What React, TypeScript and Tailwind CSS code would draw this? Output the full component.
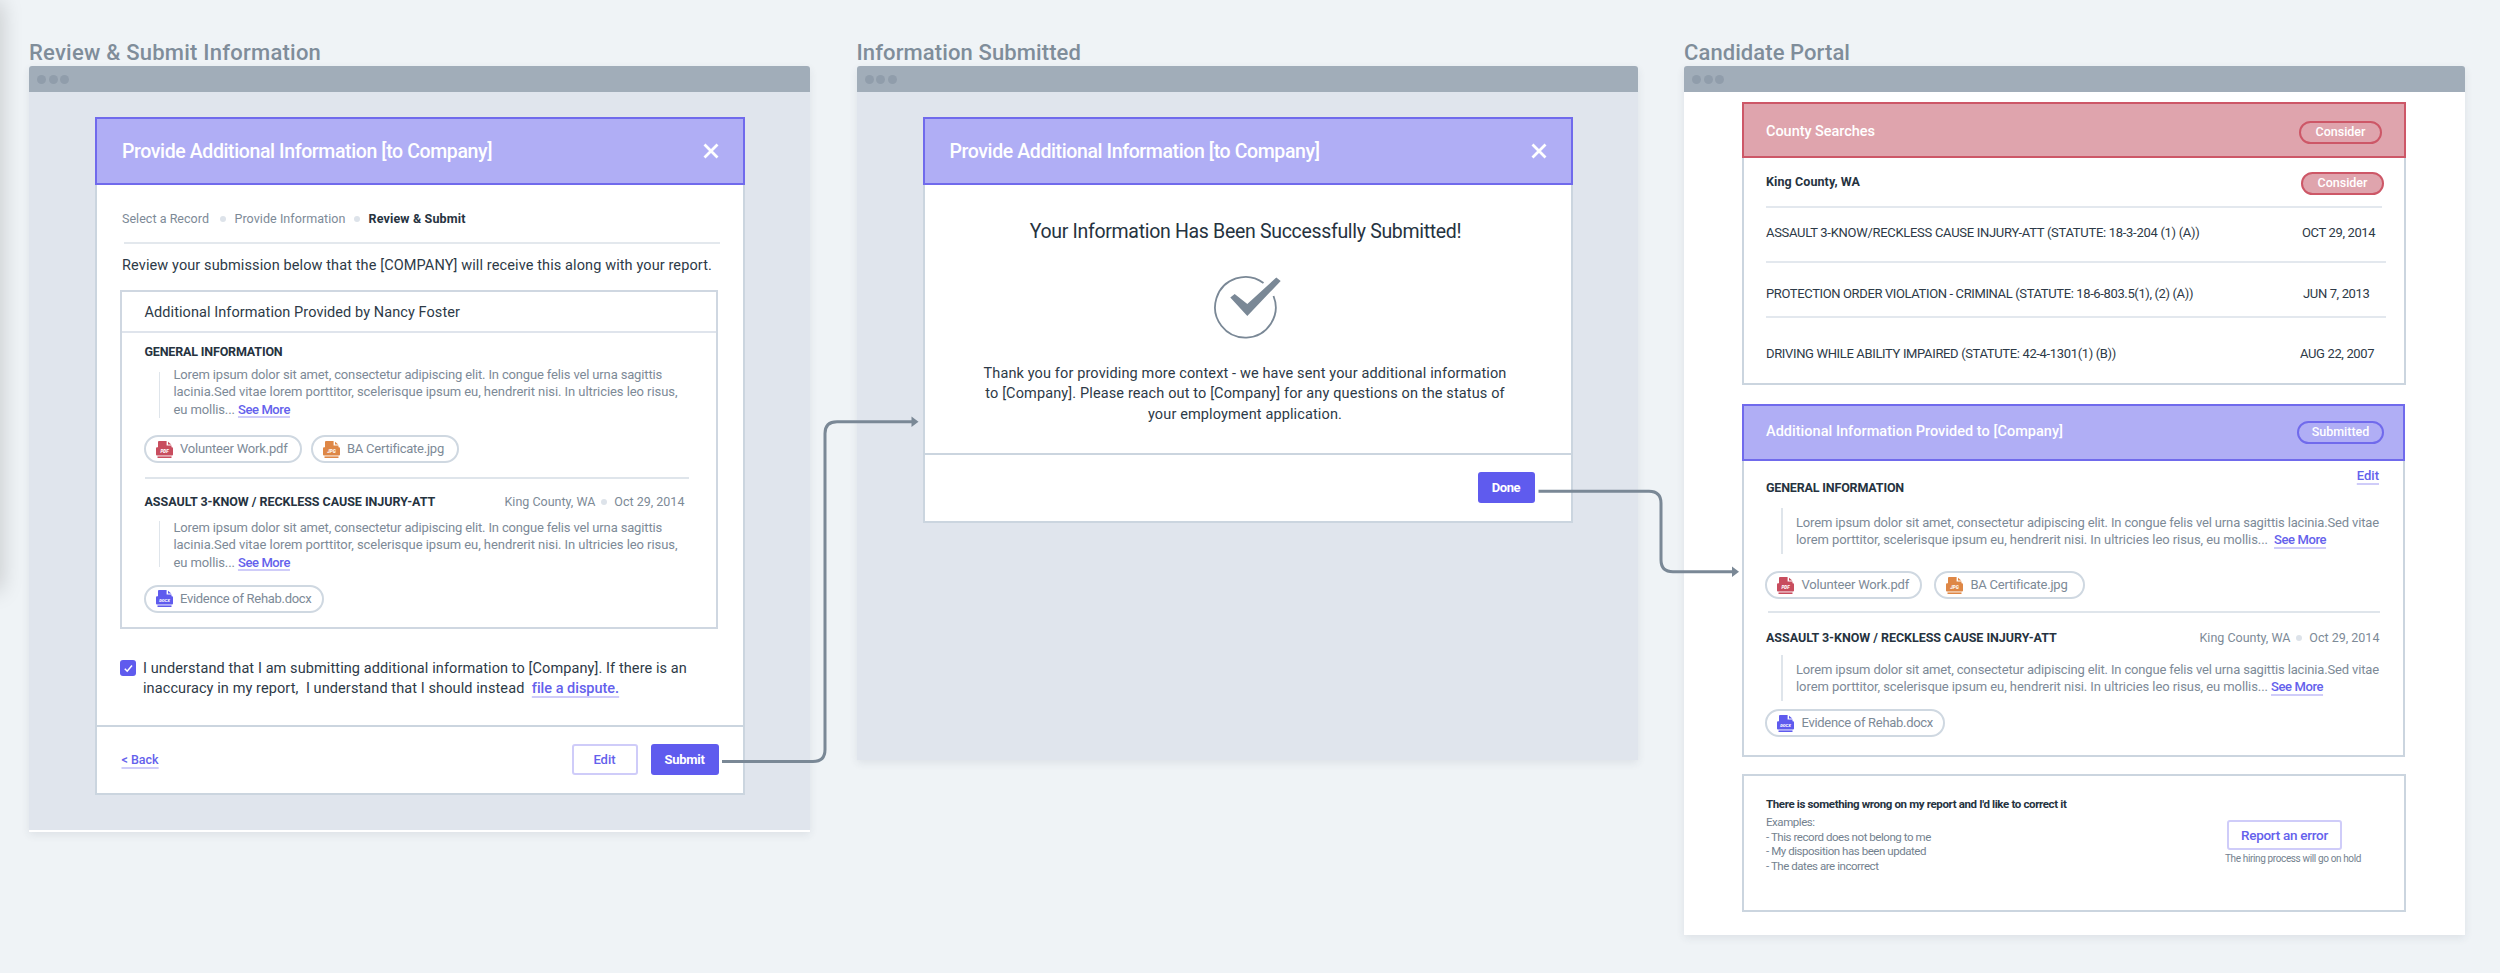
import React from "react";
import clsx from "clsx";

type FrameProps = {
  title: string;
  titleClass: string;
  bodyClass: string;
  children: React.ReactNode;
};

function Frame({ title, titleClass, bodyClass, children }: FrameProps) {
  return (
    <section className="w-[781px] shrink-0">
      <h2 className={clsx("h-[23px] text-[22px] leading-5 font-medium text-[#7f8d9a]", titleClass)}>
        {title}
      </h2>
      <div className="shadow-[0_3px_9px_rgba(40,50,80,0.09)] rounded-t-[3px]">
        <div className="flex items-center gap-[2.5px] h-[26px] pl-2 rounded-t-[3px] bg-[#a1adb9]">
          <span className="size-[9px] rounded-full bg-[#909dab]" />
          <span className="size-[9px] rounded-full bg-[#909dab]" />
          <span className="size-[9px] rounded-full bg-[#909dab]" />
        </div>
        <div className={bodyClass}>{children}</div>
      </div>
    </section>
  );
}

function Modal({ className, children }: { className: string; children: React.ReactNode }) {
  return (
    <div className={clsx("flex flex-col w-[650px] bg-white", className)}>
      <header className="flex items-center justify-between h-[68px] shrink-0 pl-[25px] pr-[24px] bg-[#b0aef5] border-2 border-[#706aec]">
        <h3 className="pt-[2px] text-[19.5px] leading-5 font-medium tracking-[-0.0201em] text-white">
          Provide Additional Information [to Company]
        </h3>
        <svg className="w-4 h-4" viewBox="0 0 16 16" fill="none" stroke="#fff" strokeWidth="2.8">
          <path d="M1.5 1.5l13 13M14.5 1.5l-13 13" />
        </svg>
      </header>
      <div className="flex flex-col grow border-2 border-t-0 border-[#cbd5df]">{children}</div>
    </div>
  );
}

function Dot({ className }: { className?: string }) {
  return <span className={clsx("size-[5.5px] rounded-full bg-[#dde3ea]", className)} />;
}

function Link({ className, children }: { className?: string; children: React.ReactNode }) {
  return (
    <a
      className={clsx(
        "font-medium text-[#6461ec] underline decoration-2 decoration-[#cfccf9] [text-decoration-skip-ink:none]",
        className
      )}
    >
      {children}
    </a>
  );
}

const fileColors = {
  PDF: "text-[#c84d5e]",
  JPG: "text-[#de8746]",
  DOCX: "text-[#5f5bee]",
};

type FilePillProps = {
  kind: keyof typeof fileColors;
  name: string;
  className: string;
  textClass: string;
};

function FilePill({ kind, name, className, textClass }: FilePillProps) {
  return (
    <div
      className={clsx(
        "flex items-center h-[28px] pl-[10px] border-2 border-[#cfd8e1] rounded-full",
        className
      )}
    >
      <svg className={clsx("size-[17px] shrink-0", fileColors[kind])} viewBox="0 0 17 17" fill="currentColor">
        <path d="M2 1Q2 0 3 0H10.6V4.6H15.5V6.3H16Q17 6.3 17 7.4V13.5Q17 14.5 16 14.5H1Q0 14.5 0 13.5V7.4Q0 6.3 1 6.3H2Z" />
        <path d="M12 .8L15.3 3.6H12Z" />
        <path d="M1.5 15.4H15.5V17H1.5Z" />
        <text
          x="8.5"
          y="12"
          fill="#fff"
          textAnchor="middle"
          fontWeight="900"
          fontStyle="italic"
          fontSize={kind === "DOCX" ? 4.2 : 4.6}
        >
          {kind}
        </text>
      </svg>
      <span className={clsx("ml-[7.5px] text-[13px] leading-5 whitespace-nowrap text-[#7d8a97]", textClass)}>
        {name}
      </span>
    </div>
  );
}

type QuoteProps = {
  className: string;
  barClass?: string;
  textClass: string;
  children: React.ReactNode;
};

function Quote({ className, barClass, textClass, children }: QuoteProps) {
  return (
    <div className={clsx("flex", className)}>
      <span className={clsx("w-[1.5px] h-[46px] shrink-0 bg-[#dfe5eb]", barClass)} />
      <p className={clsx("text-[13px] leading-[17.3px] whitespace-nowrap text-[#7d8a97]", textClass)}>
        {children}
      </p>
    </div>
  );
}

function Badge({ className, children }: { className: string; children: React.ReactNode }) {
  return (
    <span
      className={clsx(
        "flex items-center justify-center h-[23px] border-2 rounded-full text-[12.5px] font-medium text-white",
        className
      )}
    >
      {children}
    </span>
  );
}

const records = [
  {
    name: "ASSAULT 3-KNOW/RECKLESS CAUSE INJURY-ATT (STATUTE: 18-3-204 (1) (A))",
    date: "OCT 29, 2014",
    row: "h-[53px] pt-[15px] pr-[20px]",
    tracking: "tracking-[-0.0226em]",
  },
  {
    name: "PROTECTION ORDER VIOLATION - CRIMINAL (STATUTE: 18-6-803.5(1), (2) (A))",
    date: "JUN 7, 2013",
    row: "h-[53px] pt-[21px] pr-[19px]",
    tracking: "tracking-[-0.0286em]",
  },
  {
    name: "DRIVING WHILE ABILITY IMPAIRED (STATUTE: 42-4-1301(1) (B))",
    date: "AUG 22, 2007",
    row: "pt-[26px] pr-[22px]",
    tracking: "tracking-[-0.0268em]",
  },
];

function ReviewModal() {
  return (
    <Modal className="ml-[66px] h-[678px]">
      <div className="flex items-center h-5 mt-6 pl-[25px] text-[12.5px] text-[#7d8a97]">
        <span className="tracking-[0.0025em]">Select a Record</span>
        <Dot className="ml-[11px]" />
        <span className="ml-[9px] tracking-[0.0049em]">Provide Information</span>
        <Dot className="ml-[8.5px]" />
        <span className="ml-[9px] font-bold tracking-[0.0119em] text-[#26333f]">Review &amp; Submit</span>
      </div>
      <hr className="mt-[13px] ml-[27px] w-[596px] border-0 h-[2px] bg-[#e3e8ed]" />
      <p className="mt-3 pl-[25px] text-[14.5px] leading-5 tracking-[0.0074em] whitespace-nowrap text-[#2d3a47]">
        Review your submission below that the [COMPANY] will receive this along with your report.
      </p>

      <div className="mt-[14px] ml-[23px] w-[598px] h-[339px] border-2 border-[#cfd7e1]">
        <h4 className="h-[41px] pt-[11px] pl-[22.5px] border-b-2 border-[#dfe4ec] text-[14.5px] leading-5 tracking-[0.0053em] text-[#2d3a47]">
          Additional Information Provided by Nancy Foster
        </h4>
        <div className="pl-[22.5px]">
          <h5 className="mt-[9px] text-[12.5px] leading-5 font-bold tracking-[-0.0134em] text-[#26333f]">
            GENERAL INFORMATION
          </h5>
          <Quote className="mt-[4px] ml-[14px]" barClass="mt-[6px]" textClass="ml-[13.5px] tracking-[-0.008em]">
            <span className="tracking-[-0.0115em]">
              Lorem ipsum dolor sit amet, consectetur adipiscing elit. In congue felis vel urna sagittis
            </span>
            <br />
            <span className="tracking-[-0.0046em]">
              lacinia.Sed vitae lorem porttitor, scelerisque ipsum eu, hendrerit nisi. In ultricies leo risus,
            </span>
            <br />
            eu mollis... <Link className="underline-offset-2 tracking-[-0.0309em]">See More</Link>
          </Quote>
          <div className="flex gap-[9px] mt-[17px] -ml-[1px]">
            <FilePill kind="PDF" name="Volunteer Work.pdf" className="w-[158px]" textClass="tracking-[-0.0145em]" />
            <FilePill kind="JPG" name="BA Certificate.jpg" className="w-[148px]" textClass="tracking-[-0.0178em]" />
          </div>
          <hr className="mt-[14px] w-[544px] border-0 h-[2px] bg-[#dfe5eb]" />
          <div className="flex items-center mt-[13px] h-5 text-[12.5px] text-[#7d8a97]">
            <h5 className="w-[360px] font-bold tracking-[-0.0027em] text-[#26333f]">
              ASSAULT 3-KNOW / RECKLESS CAUSE INJURY-ATT
            </h5>
            <span>King County, WA</span>
            <Dot className="ml-[6px]" />
            <span className="ml-[7.5px]">Oct 29, 2014</span>
          </div>
          <Quote className="mt-[7px] ml-[14px]" barClass="mt-[2px]" textClass="ml-[13.5px] tracking-[-0.008em]">
            <span className="tracking-[-0.0115em]">
              Lorem ipsum dolor sit amet, consectetur adipiscing elit. In congue felis vel urna sagittis
            </span>
            <br />
            <span className="tracking-[-0.0046em]">
              lacinia.Sed vitae lorem porttitor, scelerisque ipsum eu, hendrerit nisi. In ultricies leo risus,
            </span>
            <br />
            eu mollis... <Link className="underline-offset-2 tracking-[-0.0309em]">See More</Link>
          </Quote>
          <FilePill
            kind="DOCX"
            name="Evidence of Rehab.docx"
            className="mt-[14px] -ml-[1px] w-[180px]"
            textClass="tracking-[-0.0228em]"
          />
        </div>
      </div>

      <div className="flex mt-[31px] ml-[23px]">
        <span className="flex items-center justify-center size-4 rounded-[3px] bg-[#5f5bee]">
          <svg className="w-[9px] h-[9px]" viewBox="0 0 9 9" fill="none" stroke="#fff" strokeWidth="1.5">
            <path d="M.8 4.8L3.2 7.2L8 1.5" />
          </svg>
        </span>
        <p className="-mt-[1px] ml-[7px] text-[14.5px] leading-[20.4px] tracking-[0.0066em] whitespace-pre text-[#2d3a47]">
          I understand that I am submitting additional information to [Company]. If there is an
          <br />
          {"inaccuracy in my report,  I understand that I should instead  "}
          <Link className="underline-offset-[3px] tracking-[-0.0006em]">file a dispute.</Link>
        </p>
      </div>

      <footer className="flex items-start justify-between mt-auto h-[68px] pt-[17px] pl-[24.5px] pr-[24.5px] border-t-2 border-[#cbd5df] text-[13px]">
        <Link className="mt-[6px] text-[12.5px] leading-5 underline-offset-[3px]">&lt; Back</Link>
        <div className="flex gap-[13px] h-[31px]">
          <button className="w-[66px] border-2 border-[#cfccf9] rounded-[3px] font-medium text-[#6461ec]">Edit</button>
          <button className="w-[68px] rounded-[3px] bg-[#5f5bee] font-bold tracking-[-0.0218em] text-white">
            Submit
          </button>
        </div>
      </footer>
    </Modal>
  );
}

function SubmittedModal() {
  return (
    <Modal className="ml-[66px] h-[406px]">
      <h4 className="mt-[37px] pr-[4px] text-center text-[19.5px] leading-5 tracking-[-0.0161em] text-[#26333f]">
        Your Information Has Been Successfully Submitted!
      </h4>
      <svg className="mt-8 ml-[287.5px] w-[70px] h-[66px]" viewBox="1212 274 70 66">
        <path d="M1263.5 283A30.3 30.3 0 1 0 1273.5 296" fill="none" stroke="#7a8896" strokeWidth="1.8" />
        <path d="M1230.3 297.6L1234.7 294L1247.3 304L1276.3 277.5L1280.7 281L1247.3 316Z" fill="#7a8896" />
      </svg>
      <p className="mt-6 pr-[5px] text-center text-[14.5px] leading-[20.3px] tracking-[0.0088em] text-[#2d3a47]">
        Thank you for providing more context - we have sent your additional information
        <br />
        to [Company]. Please reach out to [Company] for any questions on the status of
        <br />
        your employment application.
      </p>
      <footer className="flex justify-end items-start mt-auto h-[68px] pt-[17px] pr-[36px] border-t-2 border-[#cbd5df]">
        <button className="w-[57px] h-[31px] rounded-[3px] bg-[#5f5bee] text-[13px] font-bold tracking-[-0.03em] text-white">
          Done
        </button>
      </footer>
    </Modal>
  );
}

function CountySearches() {
  return (
    <div className="w-[664px] h-[283px] border-2 border-t-0 border-[#cbd5df]">
      <header className="flex justify-between h-[56px] -mx-[2px] pl-[22px] pr-[22px] bg-[#dfa4ad] border-2 border-[#cd5767]">
        <h3 className="mt-[18px] text-[14.5px] leading-5 font-medium tracking-[-0.0026em] text-white">County Searches</h3>
        <Badge className="mt-[17px] w-[83px] border-[#cd5767]">Consider</Badge>
      </header>
      <div className="pl-[22px]">
        <div className="flex justify-between h-[48px] pt-[14px] pr-[20px]">
          <h4 className="text-[12.5px] leading-5 font-bold tracking-[0.0073em] text-[#26333f]">King County, WA</h4>
          <Badge className="w-[83px] bg-[#dfa4ad] border-[#cd5767]">Consider</Badge>
        </div>
        {records.map((record, i) => (
          <div key={record.date} className={clsx("border-[#e3e8ee] border-t-2", i === 0 ? "mr-[22px]" : "mr-[18px]")}>
            <div className={clsx("flex justify-between w-[638px] text-[13px] leading-5 text-[#2d3a47] whitespace-nowrap", record.row)}>
              <span className={record.tracking}>{record.name}</span>
              <span className="w-[82px] tracking-[-0.0277em]">{record.date}</span>
            </div>
          </div>
        ))}
      </div>
    </div>
  );
}

function AdditionalInformation() {
  return (
    <div className="w-[663px] h-[353px] mt-[19px] border-2 border-t-0 border-[#cbd5df]">
      <header className="flex justify-between h-[57px] -mx-[2px] pl-[22px] pr-[19px] bg-[#b0aef5] border-2 border-[#706aec]">
        <h3 className="mt-[16px] text-[14.5px] leading-5 font-medium tracking-[0.0018em] text-white">
          Additional Information Provided to [Company]
        </h3>
        <Badge className="mt-[15px] w-[87px] border-[#706aec]">Submitted</Badge>
      </header>
      <div className="pl-[22px]">
        <div className="flex justify-between pt-[5px] pr-[24px] leading-5">
          <h5 className="mt-[12px] text-[12.5px] font-bold tracking-[-0.0134em] text-[#26333f]">GENERAL INFORMATION</h5>
          <Link className="text-[13px] underline-offset-[3px]">Edit</Link>
        </div>
        <Quote className="mt-[10px] ml-[15px]" textClass="mt-[6px] ml-[13.5px] tracking-[-0.0115em]">
          Lorem ipsum dolor sit amet, consectetur adipiscing elit. In congue felis vel urna sagittis lacinia.Sed vitae
          <br />
          <span className="tracking-[-0.0055em]">
            lorem porttitor, scelerisque ipsum eu, hendrerit nisi. In ultricies leo risus, eu mollis...{" "}
          </span>
          <Link className="ml-[3px] underline-offset-[3px] tracking-[-0.0309em]">See More</Link>
        </Quote>
        <div className="flex gap-[12px] mt-[17px] -ml-[1px]">
          <FilePill kind="PDF" name="Volunteer Work.pdf" className="w-[157px]" textClass="tracking-[-0.0145em]" />
          <FilePill kind="JPG" name="BA Certificate.jpg" className="w-[151px]" textClass="tracking-[-0.0178em]" />
        </div>
        <hr className="mt-[12px] ml-[2px] w-[612px] border-0 h-[2px] bg-[#dfe5eb]" />
        <div className="flex items-center mt-[15px] h-5 text-[12.5px] text-[#7d8a97]">
          <h5 className="w-[433.5px] font-bold tracking-[-0.0027em] text-[#26333f]">
            ASSAULT 3-KNOW / RECKLESS CAUSE INJURY-ATT
          </h5>
          <span>King County, WA</span>
          <Dot className="ml-[6px]" />
          <span className="ml-[7.5px]">Oct 29, 2014</span>
        </div>
        <Quote className="mt-[7px] ml-[15px]" textClass="mt-[6px] ml-[13.5px] tracking-[-0.0115em]">
          Lorem ipsum dolor sit amet, consectetur adipiscing elit. In congue felis vel urna sagittis lacinia.Sed vitae
          <br />
          <span className="tracking-[-0.0055em]">
            lorem porttitor, scelerisque ipsum eu, hendrerit nisi. In ultricies leo risus, eu mollis...{" "}
          </span>
          <Link className="underline-offset-[3px] tracking-[-0.0309em]">See More</Link>
        </Quote>
        <FilePill
          kind="DOCX"
          name="Evidence of Rehab.docx"
          className="mt-[8px] -ml-[1px] w-[180px]"
          textClass="tracking-[-0.0228em]"
        />
      </div>
    </div>
  );
}

function ReportError() {
  return (
    <div className="flex justify-between w-[664px] h-[138px] mt-[17px] pl-[22px] pr-[43px] border-2 border-[#cbd5df]">
      <div className="pt-[18px]">
        <h5 className="text-[11.5px] leading-5 font-bold tracking-[-0.0312em] text-[#26333f]">
          There is something wrong on my report and I'd like to correct it
        </h5>
        <ul className="mt-[1px] text-[11.5px] leading-[14.5px] tracking-[-0.0389em] text-[#74828f]">
          <li>Examples:</li>
          <li>- This record does not belong to me</li>
          <li>- My disposition has been updated</li>
          <li>- The dates are incorrect</li>
        </ul>
      </div>
      <div className="w-[136px] pt-[44px]">
        <button className="block ml-[2px] w-[115px] h-[30px] border-2 border-[#cfccf9] rounded-[3px] text-[13.5px] font-medium tracking-[-0.0203em] text-[#6461ec]">
          Report an error
        </button>
        <p className="-mt-[1px] text-[10px] leading-5 tracking-[-0.0372em] whitespace-nowrap text-[#74828f]">
          The hiring process will go on hold
        </p>
      </div>
    </div>
  );
}

export default function App() {
  return (
    <main className="relative flex items-start gap-[46.5px] w-[2500px] h-[973px] pt-[43px] pl-[29px] overflow-hidden bg-[#eff3f6] font-['Roboto',sans-serif]">
      {/* edge of the previous artboard */}
      <div className="absolute -left-4 top-0 w-4 h-[588px] shadow-[0_2px_22px_rgba(0,0,0,0.22)]" />

      <Frame
        title="Review & Submit Information"
        titleClass="tracking-[0.0105em]"
        bodyClass="h-[740px] pt-[25px] bg-[#e0e5ed] border-b-2 border-white"
      >
        <ReviewModal />
      </Frame>

      <Frame title="Information Submitted" titleClass="tracking-[0.005em]" bodyClass="h-[668px] pt-[25px] bg-[#e0e5ed]">
        <SubmittedModal />
      </Frame>

      <Frame title="Candidate Portal" titleClass="tracking-[0.0035em]" bodyClass="h-[843px] pt-[10px] pl-[58px] bg-white">
        <CountySearches />
        <AdditionalInformation />
        <ReportError />
      </Frame>

      {/* flow connectors */}
      <svg className="absolute inset-0 w-full h-full pointer-events-none" viewBox="0 0 2500 973" fill="none" stroke="#7a8896" strokeWidth="3">
        <path d="M722 761.5H813Q825 761.5 825 749.5V433.5Q825 421.7 837 421.7H913" />
        <path d="M1538.5 491.3H1649Q1661 491.3 1661 503.3V559.7Q1661 571.7 1673 571.7H1733" />
        <path d="M911.5 416.5L918.5 421.7L911.5 426.9Z" fill="#7a8896" stroke="none" />
        <path d="M1732 566.5L1739 571.7L1732 576.9Z" fill="#7a8896" stroke="none" />
      </svg>
    </main>
  );
}
